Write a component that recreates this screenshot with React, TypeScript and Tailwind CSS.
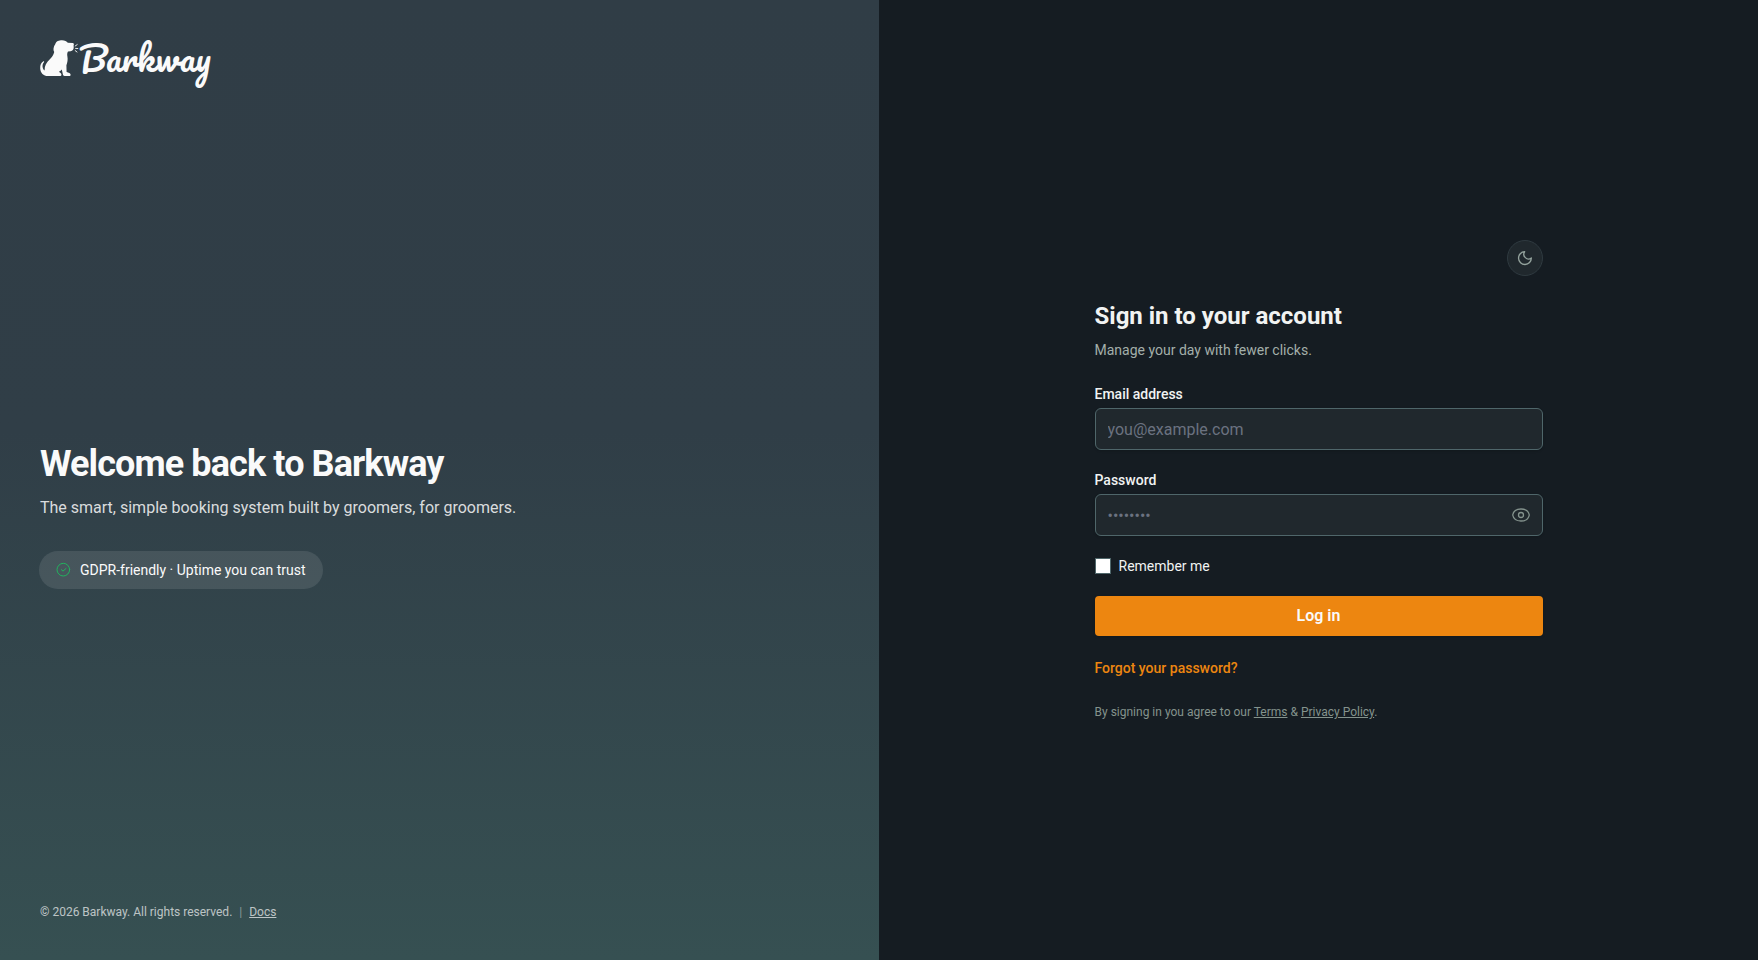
import { useState } from "react";

function DogMark() {
  return (
    <svg viewBox="0 0 39 38" className="h-[38px] w-[39px] shrink-0" fill="#fafafa" aria-hidden="true">
      <path d="M15.2 4.2 C16.2 1 19 .2 22 .2 C24.8 .2 26.6 1.2 27.8 2.8 L32.6 2.9 C33.8 3 34.3 4.2 33.6 5.2 L33.7 7.6 C33.6 9.8 32.6 11 30.6 11.2 L28 11.6 C27.2 13 27 14.6 27.4 16.4 C28 19.6 27.4 22.6 26.4 25.2 L26.6 32 L29.4 33 C30.8 33.6 31.2 35.8 29.8 36 L24.6 36 C23.6 36 23 35.2 22.8 34 L21.8 29.4 C20.8 30.6 19.8 31.4 18.8 31.8 L20.6 33 C22 34 21.6 36 20.2 36 L8 36 C3.4 36 .4 32.6 .2 28.4 C0 25 1.2 22.6 3.4 21.2 C4.2 21 4.4 21.8 3.8 22.4 C2 24.4 2 28.4 4.6 30.4 C4.4 25.6 6.6 22 9.6 19.4 C12 17.2 13.6 15 14.2 12 C12.8 9.8 13.6 6.4 15.2 4.2 Z" />
      <path d="M35.2 6 L37.2 4.6 M35.6 8.4 L37.8 8.5 M35.2 10.6 L37 12" fill="none" stroke="#fafafa" strokeWidth="0.9" strokeLinecap="round" />
    </svg>
  );
}

function CheckIcon() {
  return (
    <svg viewBox="0 0 24 24" className="size-4 shrink-0 text-[#22b35e]" fill="none" stroke="currentColor" strokeWidth="1.5" strokeLinecap="round" strokeLinejoin="round" aria-hidden="true">
      <circle cx="11" cy="11.5" r="9.5" />
      <path d="m8 11.5 2.5 2.2 4.5-4" />
    </svg>
  );
}

function MoonIcon() {
  return (
    <svg viewBox="0 0 24 24" className="size-4" fill="none" stroke="currentColor" strokeWidth="2" strokeLinecap="round" strokeLinejoin="round" aria-hidden="true">
      <path d="M11.5 2.5a7 7 0 0 0 10 9.5 9.6 9.6 0 1 1-10-9.5Z" />
    </svg>
  );
}

function EyeIcon() {
  return (
    <svg viewBox="0 0 20 20" className="size-5" fill="none" stroke="currentColor" strokeWidth="1.3" strokeLinecap="round" strokeLinejoin="round" aria-hidden="true">
      <path d="M1.7 10 C2.4 6.2 5.8 4 10 4 S17.6 6.2 18.3 10 C17.6 13.8 14.2 16 10 16 S2.4 13.8 1.7 10 Z" />
      <circle cx="10" cy="10" r="2.5" />
    </svg>
  );
}

const fieldClass =
  "block h-[42px] w-full rounded-md border border-[#4f666a] bg-[#20282d] px-3 text-base text-[#f1f3f2] shadow-sm placeholder:text-[#6b7280] focus:border-[#ee8510] focus:outline-none";

export default function App() {
  const [visible, setVisible] = useState(false);

  return (
    <div className="grid min-h-screen bg-[#151c22] font-['Roboto',sans-serif] text-[#f1f3f2] lg:grid-cols-2">
      <aside className="flex flex-col justify-between bg-linear-to-b from-[#303d46] via-[#303e47] via-45% to-[#365052] p-10 text-[#fafafa]">
        <div className="pb-10">
          <a href="#" className="flex h-12 items-start">
            <DogMark />
            <span className="font-['Pacifico','Lato',cursive] text-[34px] leading-9 font-normal">Barkway</span>
          </a>
        </div>

        <div>
          <h1 className="text-4xl font-bold tracking-tight">Welcome back to Barkway</h1>
          <p className="mt-3 text-base text-[#fafafa]/85">
            The smart, simple booking system built by groomers, for groomers.
          </p>
          <p className="mt-8 inline-flex items-center gap-2 rounded-full bg-white/10 px-4 py-2 align-top text-sm ring-1 ring-white/10">
            <CheckIcon />
            GDPR-friendly · Uptime you can trust
          </p>
        </div>

        <footer className="text-xs text-[#fafafa]/70">
          © 2026 Barkway. All rights reserved.{" "}
          <span className="mx-1 opacity-60">|</span>{" "}
          <a href="#docs" className="underline">Docs</a>
        </footer>
      </aside>

      <main className="flex items-center justify-center">
        <div className="w-full max-w-md">
          <div className="flex justify-end">
            <button type="button" aria-label="Toggle theme" className="flex size-9 items-center justify-center rounded-full border border-[#2f3a40] bg-[#20282d] text-[#94a39d]">
              <MoonIcon />
            </button>
          </div>

          <h2 className="mt-6 text-2xl font-bold">Sign in to your account</h2>
          <p className="mt-2 text-sm text-[#a3afaa]">Manage your day with fewer clicks.</p>

          <form className="mt-6 flex flex-col gap-5" onSubmit={(e) => e.preventDefault()}>
            <div>
              <label htmlFor="email" className="mb-1 block text-sm font-medium">Email address</label>
              <input id="email" type="email" placeholder="you@example.com" className={fieldClass} />
            </div>
            <div>
              <label htmlFor="password" className="mb-1 block text-sm font-medium">Password</label>
              <div className="relative">
                <input id="password" type={visible ? "text" : "password"} placeholder="••••••••" className={fieldClass} />
                <button
                  type="button"
                  aria-label="Show password"
                  onClick={() => setVisible(!visible)}
                  className="absolute inset-y-0 right-0 flex items-center px-3 text-[#84938d]"
                >
                  <EyeIcon />
                </button>
              </div>
            </div>
            <label className="flex items-center gap-2 text-sm">
              <input type="checkbox" className="size-4 appearance-none border border-[#4f666a] bg-white checked:bg-[#ee8510]" />
              Remember me
            </label>
            <button type="submit" className="h-10 rounded-sm bg-[#ed8610] text-base font-semibold text-[#fafafa] shadow-sm">
              Log in
            </button>
            <p className="leading-6">
              <a href="#forgot" className="text-sm font-medium text-[#ed8610]">Forgot your password?</a>
            </p>
          </form>

          <p className="mt-6 text-xs text-[#84938d]">
            By signing in you agree to our{" "}
            <a href="#terms" className="underline">Terms</a> &amp;{" "}
            <a href="#privacy" className="underline">Privacy Policy</a>.
          </p>
        </div>
      </main>
    </div>
  );
}
